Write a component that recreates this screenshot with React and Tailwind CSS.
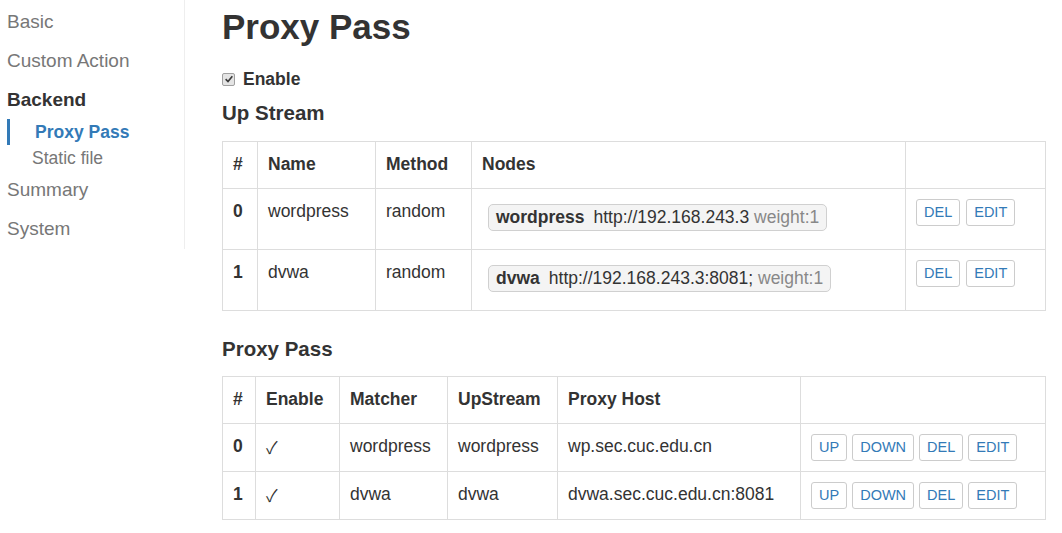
import { useState } from 'react';

const NAV = [
  { label: 'Basic', h: 'h-[40px]' },
  { label: 'Custom Action', h: 'h-[39px]' },
  { label: 'Backend', h: 'h-[39px]', bold: true },
];

const UPSTREAMS = [
  { id: 0, name: 'wordpress', method: 'random', node: 'wordpress', url: 'http://192.168.243.3', weight: 'weight:1' },
  { id: 1, name: 'dvwa', method: 'random', node: 'dvwa', url: 'http://192.168.243.3:8081;', weight: 'weight:1' },
];

const PROXIES = [
  { id: 0, matcher: 'wordpress', upstream: 'wordpress', host: 'wp.sec.cuc.edu.cn' },
  { id: 1, matcher: 'dvwa', upstream: 'dvwa', host: 'dvwa.sec.cuc.edu.cn:8081' },
];

const th = 'border border-[#ddd] px-[10px] pt-[10px] pb-[11px] text-left font-bold align-bottom';
const td = 'border border-[#ddd] px-[10px] py-[10px] align-top';

function Btn({ children }) {
  return (
    <button
      type="button"
      className="inline-flex h-[27px] items-center rounded-[3px] border border-[#ccc] bg-white px-[7px] text-[14.5px] leading-none text-[#337ab7]"
    >
      {children}
    </button>
  );
}

function CheckBox({ checked }) {
  return (
    <span className="mr-[8px] inline-flex h-[13px] w-[13px] items-center justify-center rounded-[2px] border border-[#a0a0a0] bg-[#e4e4e4]">
      {checked && (
        <svg viewBox="0 0 12 12" className="h-[10px] w-[10px]">
          <path d="M2 6.2 L4.8 9 L10 2.8" fill="none" stroke="#3a3a3a" strokeWidth="2" />
        </svg>
      )}
    </span>
  );
}

function Sidebar() {
  return (
    <div className="w-[185px] shrink-0 self-start border-r border-[#eee] pt-px">
      {NAV.map((item) => (
        <div
          key={item.label}
          className={`${item.h} flex items-center pl-[7px] text-[19px] ${item.bold ? 'font-bold text-[#333]' : 'text-[#777]'}`}
        >
          {item.label}
        </div>
      ))}
      <div className="ml-[7px] flex h-[26px] items-center border-l-[3px] border-[#337ab7] pl-[25px] text-[17.5px] font-bold text-[#337ab7]">
        Proxy Pass
      </div>
      <div className="ml-[7px] flex h-[26px] items-center pl-[25px] text-[17.5px] text-[#777]">Static file</div>
      <div className="flex h-[37px] items-center pl-[7px] text-[19px] text-[#777]">Summary</div>
      <div className="flex h-[41px] items-center pl-[7px] text-[19px] text-[#777]">System</div>
    </div>
  );
}

export default function App() {
  const [enabled] = useState(true);

  return (
    <div className="flex min-h-[533px] bg-white font-['Liberation_Sans',Arial,sans-serif] text-[17.5px] leading-[25px] text-[#333]">
      <Sidebar />

      <div className="w-[860px] pl-[37px]">
        <h1 className="mt-[8px] text-[35px] font-bold leading-[38.5px]">Proxy Pass</h1>

        <label className="mt-[20px] flex items-center font-bold">
          <CheckBox checked={enabled} />
          Enable
        </label>

        <h3 className="mt-[10px] text-[20.5px] font-bold leading-[22px]">Up Stream</h3>

        <table className="mt-[17px] w-[823px] table-fixed border-collapse">
          <thead>
            <tr>
              <th className={`${th} w-[35px]`}>#</th>
              <th className={`${th} w-[118px]`}>Name</th>
              <th className={`${th} w-[96px]`}>Method</th>
              <th className={`${th} w-[434px]`}>Nodes</th>
              <th className={`${th} w-[140px]`}></th>
            </tr>
          </thead>
          <tbody>
            {UPSTREAMS.map((u) => (
              <tr key={u.id}>
                <td className={`${td} font-bold`}>{u.id}</td>
                <td className={td}>{u.name}</td>
                <td className={td}>{u.method}</td>
                <td className={td}>
                  <span className="ml-[6px] mt-[5px] mb-[8px] inline-block rounded-[5px] border border-[#d0d0d0] bg-[#f4f4f4] px-[7px] leading-[25px]">
                    <b>{u.node}</b>
                    <span className="ml-[9px]">{u.url}</span> <span className="text-[#888]">{u.weight}</span>
                  </span>
                </td>
                <td className={td}>
                  <div className="flex gap-[6px]">
                    <Btn>DEL</Btn>
                    <Btn>EDIT</Btn>
                  </div>
                </td>
              </tr>
            ))}
          </tbody>
        </table>

        <h3 className="mt-[27px] text-[20.5px] font-bold leading-[22px]">Proxy Pass</h3>

        <table className="mt-[16px] w-[823px] table-fixed border-collapse">
          <thead>
            <tr>
              <th className={`${th} w-[33px]`}>#</th>
              <th className={`${th} w-[84px]`}>Enable</th>
              <th className={`${th} w-[108px]`}>Matcher</th>
              <th className={`${th} w-[110px]`}>UpStream</th>
              <th className={`${th} w-[243px]`}>Proxy Host</th>
              <th className={`${th} w-[245px]`}></th>
            </tr>
          </thead>
          <tbody>
            {PROXIES.map((p) => (
              <tr key={p.id}>
                <td className={`${td} font-bold`}>{p.id}</td>
                <td className={`${td} font-['Noto_Sans_CJK_SC','DejaVu_Sans',sans-serif] text-[17px]`}>✓</td>
                <td className={td}>{p.matcher}</td>
                <td className={td}>{p.upstream}</td>
                <td className={td}>{p.host}</td>
                <td className={td}>
                  <div className="flex gap-[5px]">
                    <Btn>UP</Btn>
                    <Btn>DOWN</Btn>
                    <Btn>DEL</Btn>
                    <Btn>EDIT</Btn>
                  </div>
                </td>
              </tr>
            ))}
          </tbody>
        </table>
      </div>
    </div>
  );
}
